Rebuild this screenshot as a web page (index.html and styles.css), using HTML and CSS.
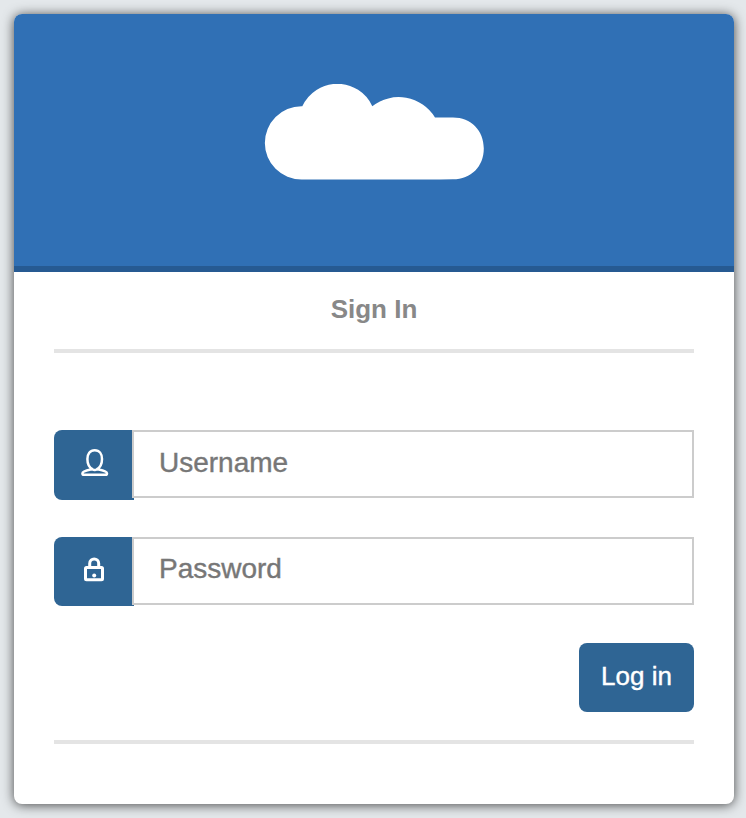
FILE: index.html
```html
<!DOCTYPE html>
<html lang="en">
<head>
<meta charset="utf-8">
<title>Sign In</title>
<link rel="stylesheet" href="styles.css">
</head>
<body>
<main class="card">
  <header class="banner">
    <svg class="cloud" viewBox="0 0 220 96" aria-hidden="true">
      <path d="M37.5 95.6A36.65 36.65 0 0 1 37.5 22.3H38.3A38.5 38.5 0 0 1 108.3 22.2A42.7 42.7 0 0 1 171 33.5H189C207 33.5 219.8 46.5 219.8 64.5C219.8 82.5 207 95.3 189 95.3L176 95.6Z"/>
    </svg>
  </header>
  <form class="form">
    <h1 class="title">Sign In</h1>
    <div class="field field-user">
      <label class="addon" for="user">
        <svg class="icon" viewBox="0 0 30 30" aria-hidden="true">
          <path d="M15.7 2.3C20.5 2.3 23 6 23 11C23 15.5 20.8 19.6 18 21.2C21.7 22 28 22.8 28 25.5C28 26.4 27.4 26.8 26.4 26.8H5C4 26.8 3.4 26.4 3.4 25.5C3.4 22.8 9.7 22 13.4 21.2C10.6 19.6 8.4 15.5 8.4 11C8.4 6 10.9 2.3 15.7 2.3ZM13.4 21.2C15 22.2 16.4 22.2 18 21.2"/>
        </svg>
      </label>
      <input class="input input-user" id="user" type="text" placeholder="Username">
    </div>
    <div class="field field-pass">
      <label class="addon" for="pass">
        <svg class="icon lock" viewBox="0 0 30 30" aria-hidden="true">
          <rect x="6.5" y="12.5" width="17" height="12.3" rx="1"/>
          <path d="M10.7 12V8.5C10.7 2.4 19.7 2.4 19.7 8.5V12"/>
          <circle class="dot" cx="15.2" cy="20.6" r="2"/>
        </svg>
      </label>
      <input class="input" id="pass" type="password" placeholder="Password">
    </div>
    <div class="actions">
      <button class="button" type="button">Log in</button>
    </div>
  </form>
</main>
</body>
</html>
```
FILE: styles.css
```css
* {
  box-sizing: border-box;
}

body {
  margin: 0;
  padding: 14px 12px 14px 14px;
  background: #e4e8eb;
  font-family: "Liberation Sans", Arial, sans-serif;
}

.card {
  height: 790px;
  overflow: hidden;
  background: #fff;
  border-radius: 8px;
  box-shadow: 0 1px 12px rgba(0, 0, 0, 0.7);
}

.banner {
  height: 258px;
  padding-top: 70px;
  background: #3070b5;
  border-bottom: 6px solid #265a92;
}

.cloud {
  display: block;
  width: 220px;
  height: 96px;
  margin: 0 auto;
  fill: #fff;
}

.form {
  padding: 0 40px;
}

.title {
  height: 81px;
  margin: 0 0 77px;
  padding-top: 22px;
  border-bottom: 4px solid #e4e4e4;
  color: #888;
  font-size: 26px;
  line-height: 30px;
  text-align: center;
}

.field {
  display: flex;
  align-items: flex-start;
}

.field-user {
  height: 70px;
  margin-bottom: 37px;
}

.field-pass {
  height: 69px;
  margin-bottom: 37px;
}

.addon {
  width: 80px;
  height: 100%;
  padding: 18px 0 0 25px;
  background: #2f6594;
  border-radius: 8px 0 0 8px;
}

.icon {
  display: block;
  width: 30px;
  height: 30px;
  fill: none;
  stroke: #fff;
  stroke-width: 2.5;
  stroke-linejoin: round;
}

.lock {
  stroke-width: 3;
}

.lock .dot {
  fill: #fff;
  stroke: none;
}

.input {
  flex: 1;
  min-width: 0;
  height: 68px;
  margin: 0 0 0 -2px;
  padding: 0 25px 4px;
  background: #fff;
  border: 2px solid #ccc;
  border-radius: 0;
  font: 28px "Liberation Sans", Arial, sans-serif;
}

.input-user {
  padding-bottom: 2px;
}

.input::placeholder {
  color: #777;
  -webkit-text-stroke: 0.4px #777;
}

.actions {
  display: flex;
  justify-content: flex-end;
  height: 101px;
  border-bottom: 4px solid #e4e4e4;
}

.button {
  width: 115px;
  height: 69px;
  padding: 0 0 3px;
  background: #2f6594;
  border: 0;
  border-radius: 8px;
  color: #fff;
  font: 26px "Liberation Sans", Arial, sans-serif;
  -webkit-text-stroke: 0.4px #fff;
}
```
